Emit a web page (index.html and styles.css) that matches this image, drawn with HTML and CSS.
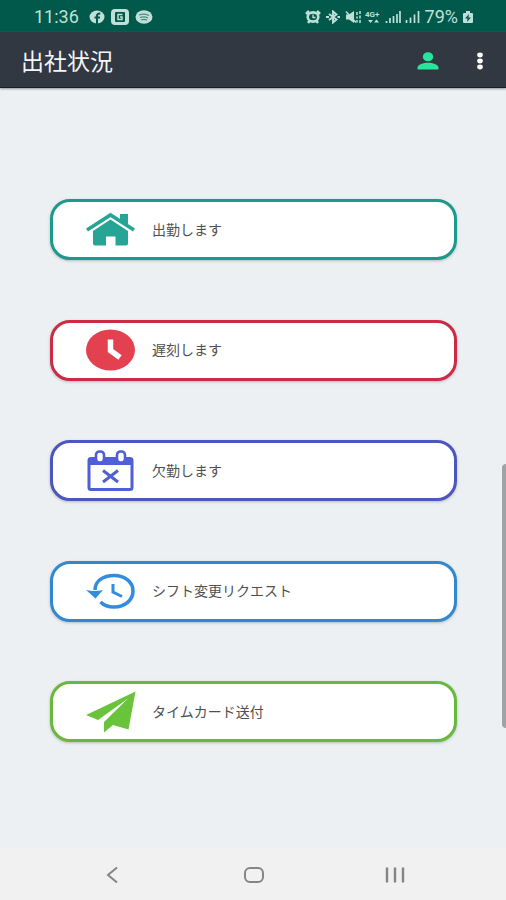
FILE: index.html
```html
<!DOCTYPE html>
<html lang="ja">
<head>
<meta charset="utf-8">
<meta name="viewport" content="width=device-width, initial-scale=1">
<title>出社状況</title>
<link rel="stylesheet" href="styles.css">
</head>
<body>
<div class="status">
  <div class="status-group">
    <span class="clock">11:36</span>
    <svg class="facebook" viewBox="0 0 16 14" width="16" height="14"><ellipse cx="8" cy="7" rx="7.5" ry="6.5" fill="currentColor"/><path d="M8 14V5.8Q8 3.4 11.3 3.6M5.5 7.5H11" fill="none" stroke="#00594a" stroke-width="2"/></svg>
    <svg class="news" viewBox="0 0 18 16" width="18" height="16"><rect width="18" height="16" rx="4" fill="currentColor"/><rect x="4" y="3" width="10" height="10" rx="1" fill="#00594a"/><path d="M11.5 5.5H7V10.5H11V8H9" fill="none" stroke="currentColor" stroke-width="1.5"/></svg>
    <svg class="music" viewBox="0 0 18 14" width="18" height="14"><ellipse cx="9" cy="7" rx="8.5" ry="6.7" fill="currentColor"/><path d="M4 5Q9 3 14 5.5M5 7.5Q9 6 13 8M6 10Q9 8.800 12 10.200" fill="none" stroke="#4b8f82" stroke-width="1.3"/></svg>
  </div>
  <div class="status-group status-right">
    <svg viewBox="0 0 16 14" width="16" height="14"><path d="M1 4L4 1M15 4L12 1M3 13L4.500 11M13 13L11.500 11" stroke="currentColor" stroke-width="2.500"/><ellipse cx="8" cy="7" rx="5.300" ry="4.600" fill="none" stroke="currentColor" stroke-width="2.600"/><path d="M8 4.500V7.500H10.500" fill="none" stroke="currentColor" stroke-width="1.300"/></svg>
    <svg viewBox="0 0 16 14" width="16" height="14"><path d="M4 4L11.500 9.500L8 12.500V1.500L11.500 4.500L4 10" fill="none" stroke="currentColor" stroke-width="1.900"/><path d="M1 7H4M12.500 7H15" stroke="currentColor" stroke-width="2"/></svg>
    <svg viewBox="0 0 16 14" width="16" height="14"><path d="M1 4.500H4L9 1V13L4 9.500H1Z" fill="currentColor"/><path d="M1 1.500L11 12.500" stroke="currentColor" stroke-width="1.500"/><path d="M12 2V5M12 6.500V8.500M12 10V12.500M15 1V4M15 5.500V8.500M15 10V13" stroke="currentColor" stroke-width="1.500"/></svg>
    <svg viewBox="0 0 16 14" width="16" height="14"><text class="network" x="0" y="7">4G+</text><path d="M3 10L5.500 13L8 10ZM9 12.500L11.500 9.500L14 12.500Z" fill="currentColor"/></svg>
    <svg viewBox="0 0 16 14" width="16" height="14"><path d="M1.500 13V11M5 13V8M8.500 13V6M12 13V4M15 13V1" stroke="currentColor" stroke-width="1.700"/></svg>
    <svg viewBox="0 0 16 14" width="16" height="14"><path d="M1.500 13V10M5.500 13V7.500M9.500 13V4.500M13.500 13V1" stroke="currentColor" stroke-width="1.700"/></svg>
    <span class="charge">79%</span>
    <svg class="battery" viewBox="0 0 12 14" width="12" height="14"><path d="M4 1H8V3H10Q11 3 11 4V12Q11 13 10 13H2Q1 13 1 12V4Q1 3 2 3H4Z" fill="currentColor"/><path d="M7 4L3 8.500H5.500L5 12L9 7.500H6.500Z" fill="#00594a"/></svg>
  </div>
</div>

<header class="appbar">
  <h1>出社状況</h1>
  <button class="bar-button person" type="button" aria-label="ユーザー"><svg viewBox="0 0 22 18" width="22" height="18"><ellipse cx="11" cy="4.700" rx="5.200" ry="4.500" fill="currentColor"/><path d="M.5 17.500V15.500C.5 12.500 6.500 10.800 11 10.800S21.500 12.500 21.500 15.500V17.500Z" fill="currentColor"/></svg></button>
  <button class="bar-button more" type="button" aria-label="メニュー"><svg viewBox="0 0 8 18" width="8" height="18"><g fill="currentColor"><ellipse cx="4" cy="3" rx="2.800" ry="2.400"/><ellipse cx="4" cy="9" rx="2.800" ry="2.400"/><ellipse cx="4" cy="15" rx="2.800" ry="2.400"/></g></svg></button>
</header>

<main class="actions">
  <button class="card teal" type="button">
    <svg viewBox="0 0 50 42" width="50" height="42"><path d="M1 21L24.500 6L48 21" fill="none" stroke="currentColor" stroke-width="3.600"/><path d="M34 5H42V18L34 12.500Z" fill="currentColor"/><path d="M7 22L24.500 10.500L42 22V34.500Q42 36.500 40 36.500H29.500V27.500H20V36.500H9Q7 36.500 7 34.500Z" fill="currentColor"/></svg>
    <span>出勤します</span>
  </button>
  <button class="card red" type="button">
    <svg viewBox="0 0 50 42" width="50" height="42"><ellipse cx="24.500" cy="21" rx="24.500" ry="20.500" fill="currentColor"/><path d="M24.500 10.500V21.500L34 28.500" fill="none" stroke="#fff" stroke-width="5.500"/></svg>
    <span>遅刻します</span>
  </button>
  <button class="card indigo" type="button">
    <svg viewBox="0 0 50 42" width="50" height="42"><rect x="3" y="8.500" width="43" height="31" rx="2" fill="none" stroke="currentColor" stroke-width="3"/><path d="M2.500 8H46.500V15H2.500Z" fill="currentColor"/><rect x="10" y="1.500" width="8" height="11" rx="3.500" fill="#fff" stroke="currentColor" stroke-width="2.600"/><rect x="31" y="1.500" width="8" height="11" rx="3.500" fill="#fff" stroke="currentColor" stroke-width="2.600"/><path d="M17 20.500L32 32M32 20.500L17 32" stroke="currentColor" stroke-width="3"/></svg>
    <span>欠勤します</span>
  </button>
  <button class="card blue" type="button">
    <svg viewBox="0 0 50 42" width="50" height="42"><path d="M9 20C9 11 17 5.500 28 5.500C39 5.500 47 12 47 21C47 30 39 37 28 37C22.500 37 18 35.500 14.500 32" fill="none" stroke="currentColor" stroke-width="3.600"/><path d="M0 20Q9 22 17 20L9.500 28.500Z" fill="currentColor"/><path d="M27 14V22L36 26.500" fill="none" stroke="currentColor" stroke-width="3"/></svg>
    <span>シフト変更リクエスト</span>
  </button>
  <button class="card green" type="button">
    <svg viewBox="0 0 50 42" width="50" height="42"><path d="M49.500 .5L0 24L12 29L42 7.500L18 31V41.500L27 34L42.500 38.500Z" fill="currentColor"/></svg>
    <span>タイムカード送付</span>
  </button>
  <div class="scroll-thumb"></div>
</main>

<nav class="system-nav">
  <button type="button" aria-label="戻る"><svg viewBox="0 0 20 18" width="20" height="18"><path d="M14 1.500L5 9L14 16.500" fill="none" stroke="currentColor" stroke-width="2"/></svg></button>
  <button type="button" aria-label="ホーム"><svg viewBox="0 0 20 18" width="20" height="18"><rect x="1" y="2" width="18" height="14" rx="5" fill="none" stroke="currentColor" stroke-width="2"/></svg></button>
  <button type="button" aria-label="履歴"><svg viewBox="0 0 20 18" width="20" height="18"><path d="M2 1.500V16.500M10 1.500V16.500M18 1.500V16.500" stroke="currentColor" stroke-width="2.400"/></svg></button>
</nav>
</body>
</html>
```
FILE: styles.css
```css
* {
  box-sizing: border-box;
}

body {
  margin: 0;
  min-height: 100vh;
  display: flex;
  flex-direction: column;
  background: #ecf0f3;
  font-family: Roboto, "Noto Sans CJK JP", sans-serif;
}

button {
  margin: 0;
  padding: 0;
  border: 0;
  background: none;
  font: inherit;
  cursor: pointer;
}

svg {
  display: block;
  flex: none;
}

.status {
  height: 32px;
  padding: 2px 32px 0 34px;
  display: flex;
  align-items: center;
  justify-content: space-between;
  background: #00594a;
  color: #bfe0d8;
}

.status-group {
  display: flex;
  align-items: center;
  gap: 6px;
}

.clock {
  margin-right: 4px;
  font-size: 18px;
  line-height: 20px;
}

.status-right {
  gap: 4px;
}

.charge {
  font-size: 18px;
  line-height: 20px;
}

.network {
  fill: currentColor;
  font-size: 8px;
  font-weight: 700;
}

.appbar {
  height: 56px;
  padding: 2px 16px 0 21px;
  display: flex;
  align-items: center;
  background: #313842;
  border-bottom: 1px solid #18202a;
  box-shadow: 0 1px 2px #8d949b;
}

.appbar h1 {
  margin: 0;
  padding-top: 4px;
  flex: 1;
  color: #f3f5f7;
  font-size: 23px;
  font-weight: 400;
  line-height: 28px;
}

.bar-button {
  display: flex;
  justify-content: center;
}

.person {
  width: 40px;
  margin-right: 22px;
  color: #25e69b;
}

.more {
  width: 20px;
  color: #fff;
}

.actions {
  position: relative;
  flex: 1;
  padding: 111px 49px 106px 50px;
  display: flex;
  flex-direction: column;
  justify-content: space-between;
  gap: 16px;
}

.card {
  min-height: 61px;
  padding: 0 33px;
  display: flex;
  align-items: center;
  gap: 16px;
  background: #fff;
  border: 3px solid;
  border-radius: 20px;
  box-shadow: 0 1px 3px #b5babf;
  text-align: left;
}

.card span {
  color: #505050;
  font-size: 14px;
  line-height: 20px;
}

.teal {
  border-color: #1b9a8c;
  color: #26a597;
}

.red {
  border-color: #cc2b43;
  color: #e34150;
}

.indigo {
  border-color: #4b56be;
  color: #4f5fd6;
}

.blue {
  border-color: #3089d0;
  color: #338ddd;
}

.green {
  border-color: #68b93b;
  color: #69c43b;
}

.scroll-thumb {
  position: absolute;
  top: 376px;
  right: 0;
  width: 4px;
  height: 264px;
  background: #a2a1a5;
  border-radius: 4px 0 0 4px;
}

.system-nav {
  height: 52px;
  padding: 2px 40px 0 42px;
  display: flex;
  background: #f1f1f1;
  color: #858585;
}

.system-nav button {
  flex: 1;
  display: flex;
  align-items: center;
  justify-content: center;
  color: inherit;
}
```
